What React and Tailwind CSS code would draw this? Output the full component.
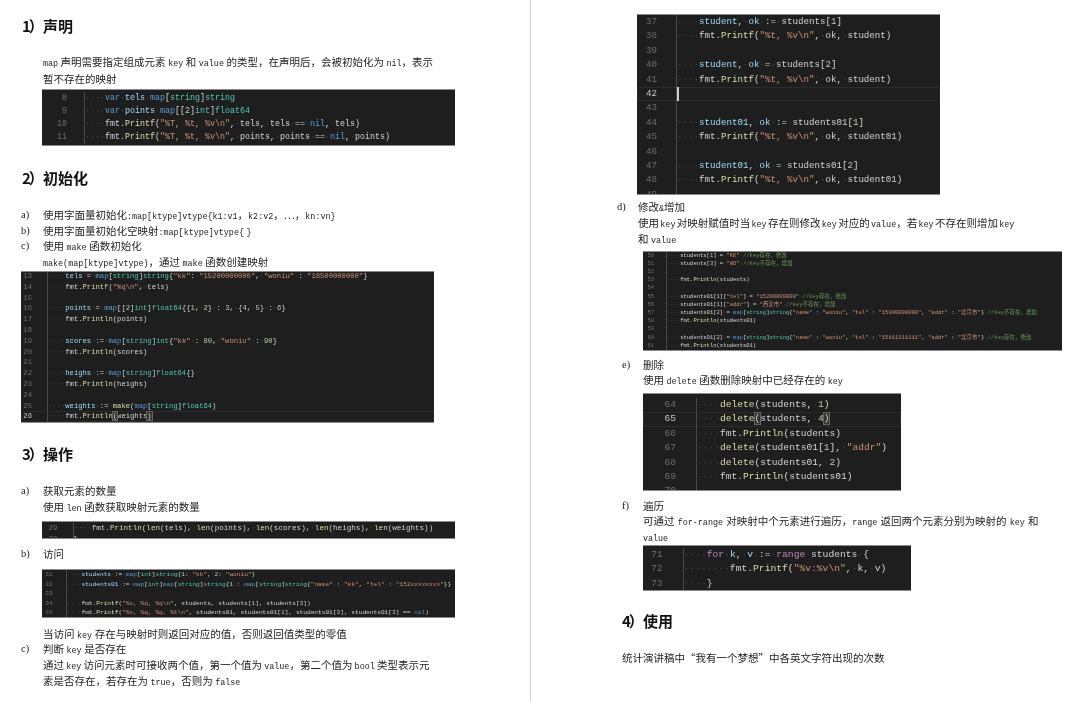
const TOKEN = /("(?:[^"\\]|\\.)*")|(\/\/.*$)|@(\w+)|\b(var|map|nil)\b|\b(string|int|float64)\b|\b(for|range)\b|\b(Printf|Println|make|delete|len)\b|\b(\d+)\b|⟦(.)⟧|( +)|(\w+)|(.)/g;

function tokens(src) {
  const out = [];
  let m;
  let i = 0;
  TOKEN.lastIndex = 0;
  while ((m = TOKEN.exec(src))) {
    i += 1;
    if (m[1]) out.push(<span key={i} className="text-[#ce9178]">{m[1]}</span>);
    else if (m[2]) out.push(<span key={i} className="text-[#6a9955]">{m[2]}</span>);
    else if (m[3]) out.push(<span key={i} className="text-[#9cdcfe]">{m[3]}</span>);
    else if (m[4]) out.push(<span key={i} className="text-[#569cd6]">{m[4]}</span>);
    else if (m[5]) out.push(<span key={i} className="text-[#4ec9b0]">{m[5]}</span>);
    else if (m[6]) out.push(<span key={i} className="text-[#c586c0]">{m[6]}</span>);
    else if (m[7]) out.push(<span key={i} className="text-[#dcdcaa]">{m[7]}</span>);
    else if (m[8]) out.push(<span key={i} className="text-[#b5cea8]">{m[8]}</span>);
    else if (m[9]) out.push(<span key={i} className="text-[#d4d4d4] bg-[#333] outline outline-[#666]">{m[9]}</span>);
    else if (m[10]) out.push(<span key={i} className="text-[#4a4a4a]">{"·".repeat(m[10].length)}</span>);
    else out.push(<span key={i} className="text-[#d4d4d4]">{m[11] || m[12]}</span>);
  }
  return out;
}

function Code({ start, rows, active, cursor, box, type, gutter }) {
  return (
    <div className={`${box} overflow-hidden bg-[#1e1e1e] border-y border-[#8a8a8a] font-['Liberation_Mono','Noto_Sans_CJK_SC',monospace] whitespace-pre`}>
      <div className={type}>
        {rows.map((row, n) => {
          const num = start + n;
          const on = num === active;
          return (
            <div key={num} className={on ? "flex shadow-[inset_0_0_0_1px_#2b2b2b]" : "flex"}>
              <div className={`${gutter} shrink-0 text-right border-r border-[#4a4a4a] ${on ? "text-[#c6c6c6]" : "text-[#6e6e6e]"}`}>{num}</div>
              <div className={cursor === num ? "flex-1 border-l-2 border-[#d0d0d0]" : "flex-1"}>{tokens(row) }{row === "" ? " " : null}</div>
            </div>
          );
        })}
      </div>
    </div>
  );
}

function Mixed({ text, ws }) {
  return text.split(/([\x20-\x7e]+)/).map((part, i) =>
    /^[\x20-\x7e]+$/.test(part) ? (
      <span key={i} className={`font-['Liberation_Mono',monospace] text-[8.4px] ${ws}`}>{part}</span>
    ) : (
      <span key={i}>{part}</span>
    )
  );
}

function H({ n, text, className = "" }) {
  return (
    <h2 className={`h-5 leading-5 text-[15px] font-bold text-[#111] font-['Noto_Sans_CJK_SC',sans-serif] ${className}`}>
      <span className="inline-block w-[21px]">
        {n}
        <span className="-ml-[2px] tracking-[-3px]">）</span>
      </span>
      {text}
    </h2>
  );
}

function P({ text, className = "", label, pad = "pl-[22px]", labelW = "w-[22px]", ws = "[word-spacing:-2.5px]", line = "h-[15.7px] leading-[15.7px]" }) {
  return (
    <div className={`flex ${line} text-[10.5px] text-[#222] whitespace-pre font-['Noto_Sans_CJK_SC',sans-serif] ${label ? "" : pad} ${className}`}>
      {label ? <span className={`${labelW} font-['Liberation_Serif',serif] text-[10.5px]`}>{label}</span> : null}
      <span><Mixed text={text} ws={ws} /></span>
    </div>
  );
}

function Left() {
  return (
    <div className="w-[530px] shrink-0 pt-4 pl-[21px]">
      <H n="1" text="声明" className="ml-px" />
      <P className="mt-[17px]" line="h-[17px] leading-[17px]" text="map 声明需要指定组成元素 key 和 value 的类型，在声明后，会被初始化为 nil，表示" />
      <P line="h-[17px] leading-[17px]" text="暂不存在的映射" />
      <div className="mt-[2px] ml-[21px]">
        <Code start={8} box="w-[413px] h-[57px]" type="pt-[2px] text-[8.33px] leading-[12.9px]" gutter="w-[43px] pr-[17px]"
          rows={[
            "    var @tels map[string]string",
            "    var @points map[[2]int]float64",
            '    fmt.Printf("%T, %t, %v\\n", tels, tels == nil, tels)',
            '    fmt.Printf("%T, %t, %v\\n", points, points == nil, points)',
          ]} />
      </div>
      <H n="2" text="初始化" className="mt-[22px] ml-px" />
      <P label="a)" className="mt-[19px]" text="使用字面量初始化:map[ktype]vtype{k1:v1，k2:v2，…，kn:vn}" />
      <P label="b)" text="使用字面量初始化空映射:map[ktype]vtype{ }" />
      <P label="c)" text="使用 make 函数初始化" />
      <P text="make(map[ktype]vtype)，通过 make 函数创建映射" />
      <div className="mt-[1.7px]">
        <Code start={13} active={26} box="w-[413px] h-[152px]" type="-mt-[1.5px] text-[7.2px] leading-[10.8px]" gutter="w-[27px] pr-[15px]"
          rows={[
            '    @tels = map[string]string{"kk": "15200000000", "woniu" : "18500000000"}',
            '    fmt.Printf("%q\\n", tels)',
            "",
            "    @points = map[[2]int]float64{{1, 2} : 3, {4, 5} : 6}",
            "    fmt.Println(points)",
            "",
            '    @scores := map[string]int{"kk" : 80, "woniu" : 90}',
            "    fmt.Println(scores)",
            "",
            "    @heighs := map[string]float64{}",
            "    fmt.Println(heighs)",
            "",
            "    @weights := make(map[string]float64)",
            "    fmt.Println⟦(⟧weights⟦)⟧",
          ]} />
      </div>
      <H n="3" text="操作" className="mt-[21px] ml-px" />
      <P label="a)" className="mt-[19px]" text="获取元素的数量" />
      <P text="使用 len 函数获取映射元素的数量" />
      <div className="mt-[6.6px] ml-[21px]">
        <Code start={29} box="w-[413px] h-[18px]" type="pt-[1px] text-[7.58px] leading-[11px]" gutter="w-[31.5px] pr-[15px]"
          rows={[
            "    fmt.Println(len(tels), len(points), len(scores), len(heighs), len(weights))",
            "}",
          ]} />
      </div>
      <P label="b)" className="mt-[7px]" text="访问" />
      <div className="mt-[7.3px] ml-[21px]">
        <Code start={31} box="w-[413px] h-[49px]" type="text-[6.17px] leading-[9.4px]" gutter="w-[24.7px] pr-[13px]"
          rows={[
            '    @students := map[int]string{1: "kk", 2: "woniu"}',
            '    @students01 := map[int]map[string]string{1 : map[string]string{"name" : "kk", "tel" : "152xxxxxxxx"}}',
            "",
            '    fmt.Printf("%v, %q, %q\\n", students, students[1], students[3])',
            '    fmt.Printf("%v, %q, %q, %t\\n", students01, students01[1], students01[3], students01[3] == nil)',
          ]} />
      </div>
      <P className="mt-[7.2px]" text="当访问 key 存在与映射时则返回对应的值，否则返回值类型的零值" />
      <P label="c)" text="判断 key 是否存在" />
      <P ws="[word-spacing:-2.8px]" text="通过 key 访问元素时可接收两个值，第一个值为 value，第二个值为 bool 类型表示元" />
      <P text="素是否存在，若存在为 true，否则为 false" />
    </div>
  );
}

function Right() {
  return (
    <div className="flex-1 pt-[14px] pl-[86px] border-l border-[#cfcfcf]">
      <div className="ml-[20px]">
        <Code start={37} active={42} cursor={42} box="w-[303px] h-[181px]" type="text-[9.17px] leading-[14.4px]" gutter="w-[40px] pr-[19px]"
          rows={[
            "    @student, @ok := students[1]",
            '    fmt.Printf("%t, %v\\n", ok, student)',
            "",
            "    @student, @ok = students[2]",
            '    fmt.Printf("%t, %v\\n", ok, student)',
            "",
            "",
            "    @student01, @ok := students01[1]",
            '    fmt.Printf("%t, %v\\n", ok, student01)',
            "",
            "    @student01, @ok = students01[2]",
            '    fmt.Printf("%t, %v\\n", ok, student01)',
            "",
          ]} />
      </div>
      <P label="d)" className="mt-[4.2px]" labelW="w-[21px]" text="修改&增加" />
      <P pad="pl-[21px]" ws="[word-spacing:-3.7px]" text="使用 key 对映射赋值时当 key 存在则修改 key 对应的 value，若 key 不存在则增加 key" />
      <P pad="pl-[21px]" text="和 value" />
      <div className="mt-[4.3px] ml-[26px]">
        <Code start={50} box="w-[419px] h-[100px]" type="text-[5.5px] leading-[8.2px]" gutter="w-[24px] pr-[12px]"
          rows={[
            '    students[1] = "KK" //key存在，修改',
            '    students[3] = "WD" //key不存在，增加',
            "",
            "    fmt.Println(students)",
            "",
            '    students01[1]["tel"] = "15200000000" //key存在，修改',
            '    students01[1]["addr"] = "西安市" //key不存在，增加',
            '    students01[2] = map[string]string{"name" : "woniu", "tel" : "15800000000", "addr" : "北京市"} //key不存在，增加',
            "    fmt.Println(students01)",
            "",
            '    students01[2] = map[string]string{"name" : "woniu", "tel" : "15811111111", "addr" : "北京市"} //key存在，修改',
            "    fmt.Println(students01)",
          ]} />
      </div>
      <div className="pl-[5px]">
        <P label="e)" className="mt-[6.2px]" labelW="w-[21px]" text="删除" />
        <P pad="pl-[21px]" text="使用 delete 函数删除映射中已经存在的 key" />
        <div className="mt-[4.4px] ml-[21px]">
          <Code start={64} active={65} box="w-[258px] h-[98px]" type="pt-[4.5px] text-[9.6px] leading-[14.4px]" gutter="w-[54px] pr-[20px]"
            rows={[
              "    delete(students, 1)",
              "    delete⟦(⟧students, 4⟦)⟧",
              "    fmt.Println(students)",
              '    delete(students01[1], "addr")',
              "    delete(students01, 2)",
              "    fmt.Println(students01)",
              "",
            ]} />
        </div>
        <P label="f)" className="mt-[7.2px]" labelW="w-[21px]" text="遍历" />
        <P pad="pl-[21px]" ws="[word-spacing:-1.8px]" text="可通过 for-range 对映射中个元素进行遍历，range 返回两个元素分别为映射的 key 和" />
        <P pad="pl-[21px]" text="value" />
        <div className="ml-[21px]">
          <Code start={71} box="w-[268px] h-[46px]" type="pt-[2px] text-[9.67px] leading-[14.7px]" gutter="w-[40.5px] pr-[20px]"
            rows={[
              "    for @k, @v := range students {",
              '        fmt.Printf("%v:%v\\n", k, v)',
              "    }",
            ]} />
        </div>
        <H n="4" text="使用" className="mt-5" />
        <P className="mt-[19px]" pad="pl-0" text="统计演讲稿中“我有一个梦想”中各英文字符出现的次数" />
      </div>
    </div>
  );
}

export default function App() {
  return (
    <div className="flex w-[1080px] h-[701px] overflow-hidden bg-white blur-[0.5px]">
      <Left />
      <Right />
    </div>
  );
}
